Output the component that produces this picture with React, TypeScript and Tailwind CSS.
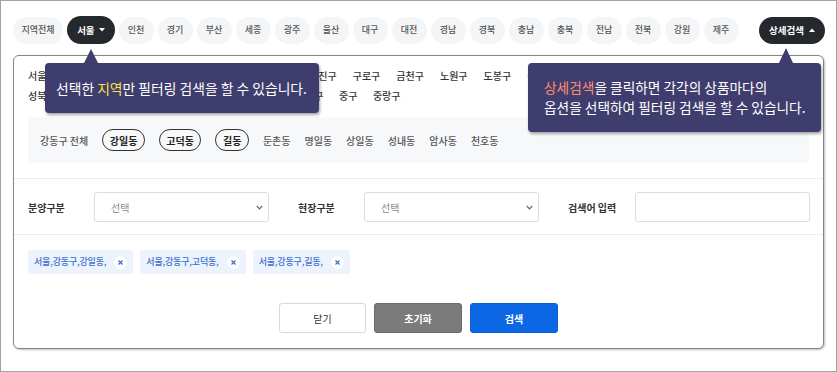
const REGIONS = ["인천", "경기", "부산", "세종", "광주", "울산", "대구", "대전", "경남", "경북", "충남", "충북", "전남", "전북", "강원", "제주"];

const DISTRICTS_1 = ["서울 전체", "강남구", "강동구", "강북구", "강서구", "관악구", "광진구", "구로구", "금천구", "노원구", "도봉구", "동대문구", "동작구", "마포구", "서대문구", "서초구", "성동구"];
const DISTRICTS_2 = ["성북구", "송파구", "양천구", "영등포구", "용산구", "은평구", "종로구", "중구", "중랑구"];

const DONGS: { name: string; on?: boolean }[] = [
  { name: "강일동", on: true },
  { name: "고덕동", on: true },
  { name: "길동", on: true },
  { name: "둔촌동" },
  { name: "명일동" },
  { name: "상일동" },
  { name: "성내동" },
  { name: "암사동" },
  { name: "천호동" },
];

const TAGS = ["서울,강동구,강일동,", "서울,강동구,고덕동,", "서울,강동구,길동,"];

function Caret({ up }: { up?: boolean }) {
  return (
    <svg width="6" height="4" viewBox="0 0 6 4" className="shrink-0">
      <path d={up ? "M0 4 L3 0.5 L6 4 Z" : "M0 0 L3 3.5 L6 0 Z"} fill="#fff" />
    </svg>
  );
}

function Select({ label }: { label: string }) {
  return (
    <div className="flex items-center">
      <span className="w-[66px] text-[10px] font-bold text-[#333]">{label}</span>
      <div className="flex h-[30px] w-[175px] items-center justify-between rounded-[3px] border border-[#dcdcdc] bg-white pl-[16px] pr-[5px]">
        <span className="text-[10px] text-[#8a8a8a]">선택</span>
        <svg width="7" height="5" viewBox="0 0 7 5">
          <path d="M0.8 1 L3.5 3.8 L6.2 1" fill="none" stroke="#666" strokeWidth="1.2" />
        </svg>
      </div>
    </div>
  );
}

export default function App() {
  return (
    <div className="relative h-[372px] w-[837px] overflow-hidden border border-[#a3a3a3] bg-white px-[12px] pt-[15px] font-['Noto_Sans_CJK_KR','Noto_Sans',sans-serif]">
      {/* region pills */}
      <div className="flex items-center justify-between">
        <div className="flex items-center gap-[4px]">
          <span className="flex h-[27px] items-center rounded-full bg-[#f4f5f7] px-[8.5px] text-[9px] font-medium text-[#555]">지역전체</span>
          <span className="flex h-[28px] items-center gap-[4px] rounded-full bg-[#25292d] px-[10px] text-[9.5px] font-bold text-white">
            서울 <Caret />
          </span>
          {REGIONS.map((r) => (
            <span key={r} className="flex h-[27px] w-[35px] items-center justify-center rounded-full bg-[#f4f5f7] text-[9px] font-medium text-[#555]">
              {r}
            </span>
          ))}
        </div>
        <span className="mr-[-1px] flex h-[27px] items-center gap-[5px] rounded-full bg-[#25292d] px-[10px] text-[9.5px] font-bold text-white">
          상세검색 <Caret up />
        </span>
      </div>

      {/* panel */}
      <div className="mt-[11px] rounded-[6px] border border-[#858585] bg-white shadow-[1px_1px_2px_rgba(0,0,0,0.25)]">
        <div className="px-[14px] pt-[9px]">
          <div className="flex flex-col">
            <div className="flex h-[20px] items-center gap-[16px] text-[10px] font-medium text-[#333]">
              {DISTRICTS_1.map((d, i) => (
                <span key={d} className={i === 0 ? "mr-[8px] whitespace-nowrap" : "whitespace-nowrap"}>
                  {d}
                </span>
              ))}
            </div>
            <div className="flex h-[20px] items-center gap-[15.5px] text-[10px] font-medium text-[#333]">
              {DISTRICTS_2.map((d) => (
                <span key={d} className="whitespace-nowrap">{d}</span>
              ))}
            </div>
          </div>

          <div className="mb-[15px] mt-[12px] flex h-[46px] items-center gap-[14px] rounded-[4px] bg-[#f7f8fa] px-[12px] text-[10px] text-[#555]">
            <span className="font-medium">강동구 전체</span>
            {DONGS.map((d) =>
              d.on ? (
                <span key={d.name} className="flex h-[22px] items-center rounded-full border-[1.5px] border-[#333] px-[6.5px] font-bold text-[#222]">
                  {d.name}
                </span>
              ) : (
                <span key={d.name} className="font-medium">{d.name}</span>
              )
            )}
          </div>
        </div>

        {/* form row */}
        <div className="flex items-center gap-[29px] border-t border-[#ececec] px-[14px] pb-[12px] pt-[13px]">
          <Select label="분양구분" />
          <Select label="현장구분" />
          <div className="flex items-center">
            <span className="w-[67px] text-[10px] font-bold text-[#333]">검색어 입력</span>
            <div className="h-[30px] w-[175px] rounded-[3px] border border-[#dcdcdc] bg-white" />
          </div>
        </div>

        {/* selected tags */}
        <div className="border-t border-[#ececec] px-[14px] pb-[15px] pt-[15px]">
          <div className="flex gap-[7px]">
            {TAGS.map((t) => (
              <span key={t} className="flex h-[24px] items-center gap-[8px] rounded-[2px] bg-[#edf3fc] pl-[6px] pr-[6px] text-[9px] font-medium tracking-[-0.02em] text-[#3b6fd0]">
                {t}
                <span className="flex h-[13px] w-[13px] items-center justify-center rounded-full bg-white">
                  <svg width="5" height="5" viewBox="0 0 5 5">
                    <path d="M0.5 0.5 L4.5 4.5 M4.5 0.5 L0.5 4.5" stroke="#3b6fd0" strokeWidth="1.3" />
                  </svg>
                </span>
              </span>
            ))}
          </div>

          <div className="mt-[29px] flex justify-center gap-[8px]">
            <button className="h-[30px] w-[87px] rounded-[3px] border border-[#d8d8d8] bg-white text-[10px] text-[#333]">닫기</button>
            <button className="h-[30px] w-[88px] rounded-[3px] border border-[#6a6a6a] bg-[#7b7b7b] text-[10px] font-bold text-white">초기화</button>
            <button className="h-[30px] w-[88px] rounded-[3px] border border-[#0a5fd4] bg-[#0b67e4] text-[10px] font-bold text-white">검색</button>
          </div>
        </div>
      </div>

      {/* tooltip: region */}
      <div className="absolute left-[44px] top-[62px] flex h-[50px] w-[274px] items-center rounded-[4px] bg-[#3f3d6d] pl-[11px] text-[13.8px] text-white shadow-[1px_2px_3px_rgba(0,0,0,0.35)]">
        <span className="absolute left-[39px] top-[-14px] h-0 w-0 border-b-[14px] border-l-[7px] border-r-[7px] border-b-[#3f3d6d] border-l-transparent border-r-transparent" />
        <span className="whitespace-nowrap">
          선택한 <span className="text-[#ffe04a]">지역</span>만 필터링 검색을 할 수 있습니다.
        </span>
      </div>

      {/* tooltip: advanced search */}
      <div className="absolute left-[527px] top-[62px] h-[69px] w-[293px] rounded-[4px] bg-[#3f3d6d] pl-[16px] pt-[14px] text-[13.7px] leading-[20px] text-white shadow-[1px_2px_3px_rgba(0,0,0,0.35)]">
        <span className="absolute left-[251px] top-[-15px] h-0 w-0 border-b-[15px] border-l-[7px] border-r-[7px] border-b-[#3f3d6d] border-l-transparent border-r-transparent" />
        <p className="whitespace-nowrap">
          <span className="text-[#ff8e72]">상세검색</span>을 클릭하면 각각의 상품마다의
        </p>
        <p className="whitespace-nowrap">옵션을 선택하여 필터링 검색을 할 수 있습니다.</p>
      </div>
    </div>
  );
}
